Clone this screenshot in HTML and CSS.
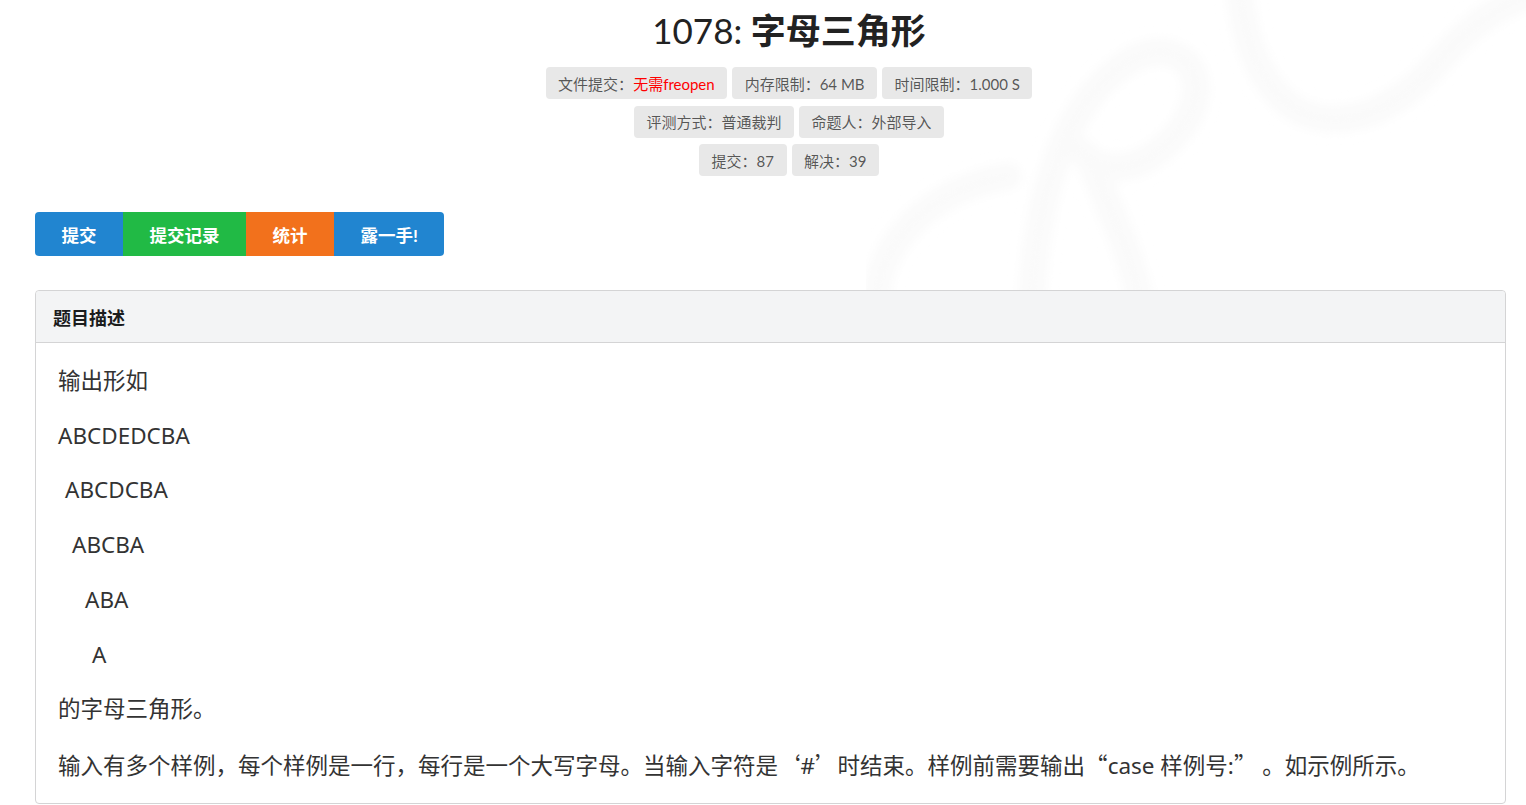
FILE: index.html
```html
<!DOCTYPE html>
<html>
    <head>
        <meta charset="utf-8" />
        <meta name="viewport" content="width=device-width, initial-scale=1" />
        <title>1078: 字母三角形</title>
        <link rel="stylesheet" href="styles.css">
    </head>
    <body>
        <svg class="watermark" width="660" height="300" viewBox="866 0 660 300" aria-hidden="true">
            <defs>
                <filter id="soft"><feGaussianBlur stdDeviation="6" /></filter>
            </defs>
            <g fill="none" stroke="#fafafa" stroke-width="26" stroke-linecap="round" filter="url(#soft)">
                <path d="M876 300 C880 240 930 190 1008 176" />
                <path d="M1032 300 C1034 240 1044 190 1062 145 C1085 90 1130 48 1165 52 C1205 58 1210 110 1160 150 C1130 175 1095 170 1080 150" />
                <path d="M1090 160 C1110 210 1130 250 1140 300" />
                <path d="M1240 -10 C1245 60 1275 110 1320 118 C1370 125 1410 95 1440 60 C1470 25 1500 5 1530 -5" />
            </g>
        </svg>

        <div class="page">
            <div class="problem-header">
                <h1 class="problem-title"><span class="problem-id">1078:</span> 字母三角形</h1>
                <div class="label-row">
                    <span class="info-label">文件提交：<b class="info-red">无需freopen</b></span>
                    <span class="info-label">内存限制：64 MB</span>
                    <span class="info-label">时间限制：1.000 S</span>
                </div>
                <div class="label-row">
                    <span class="info-label">评测方式：普通裁判</span>
                    <span class="info-label">命题人：外部导入</span>
                </div>
                <div class="label-row">
                    <span class="info-label">提交：87</span>
                    <span class="info-label">解决：39</span>
                </div>
            </div>

            <div class="btn-group">
                <a class="btn btn-blue" href="#">提交</a>
                <a class="btn btn-green" href="#">提交记录</a>
                <a class="btn btn-orange" href="#">统计</a>
                <a class="btn btn-blue" href="#">露一手!</a>
            </div>

            <div class="panel">
                <div class="panel__header">题目描述</div>
                <div class="panel__body">
                    <p>输出形如</p>
                    <p>ABCDEDCBA</p>
                    <p class="indent-1">ABCDCBA</p>
                    <p class="indent-2">ABCBA</p>
                    <p class="indent-3">ABA</p>
                    <p class="indent-4">A</p>
                    <p>的字母三角形。</p>
                    <p>输入有多个样例，每个样例是一行，每行是一个大写字母。当输入字符是<span class="cjk-quote">‘</span>#<span class="cjk-quote">’</span>时结束。样例前需要输出<span class="cjk-quote">“</span>case 样例号:<span class="cjk-quote">”</span> 。如示例所示。</p>
                </div>
            </div>
        </div>
    </body>
</html>
```

FILE: styles.css
```css
*,*::before,*::after{
    box-sizing: border-box;
}
body{
    margin:0;
    padding:0;
    background:#fff;
    font-family: Lato, "Noto Sans CJK SC", sans-serif;
    color:rgba(0,0,0,0.87);
    position: relative;
    overflow:hidden;
}
.watermark{
    position:absolute;
    top:0;
    right:0;
    z-index:0;
}
.page{
    position: relative;
    z-index:1;
    padding:0 20px 0 35px;
}

/* title + info labels */
.problem-header{
    padding-left:37px;
    text-align:center;
}
.problem-title{
    margin:9px 0 16px;
    font-size:35px;
    line-height:42px;
    font-weight:700;
    color:#222;
}
.problem-id{
    font-weight:400;
}
.label-row{
    display:flex;
    justify-content:center;
    gap:5px;
    margin-bottom:6.5px;
}
.info-label{
    display:inline-flex;
    align-items:center;
    height:32px;
    padding:0 12.5px;
    background:#e8e8e8;
    border-radius:4px;
    font-size:15px;
    color:rgba(0,0,0,0.65);
}
.info-red{
    color:#ff0000;
    font-weight:400;
}

/* action buttons */
.btn-group{
    display:inline-flex;
    margin-top:29.5px;
    border-radius:4px;
    overflow:hidden;
}
.btn{
    display:flex;
    align-items:center;
    height:44px;
    padding:0 26.5px;
    font-size:17.5px;
    font-weight:700;
    color:#fff;
    text-decoration:none;
}
.btn-blue{ background:#2185d0; }
.btn-green{ background:#21ba45; }
.btn-orange{ background:#f2711c; }

/* description panel */
.panel{
    margin-top:34px;
    border:1px solid #d4d4d5;
    border-radius:4px;
    background:#fff;
}
.panel__header{
    height:52px;
    display:flex;
    align-items:center;
    padding:0 17px;
    background:#f3f4f5;
    border-bottom:1px solid #d4d4d5;
    border-radius:4px 4px 0 0;
    font-size:18px;
    font-weight:700;
    color:#1b1c1d;
}
.panel__body{
    padding:23px 22px 21px;
    font-family:"Noto Sans", "Noto Sans CJK SC", sans-serif;
    font-size:22.5px;
    color:#333;
}
.panel__body p{
    margin:0 0 24px;
    line-height:30.7px;
}
.panel__body p:last-child{
    margin-bottom:0;
}
.cjk-quote{
    font-family:"Noto Sans CJK SC", sans-serif;
}
.indent-1{ padding-left:7px; }
.indent-2{ padding-left:14px; }
.indent-3{ padding-left:27px; }
.indent-4{ padding-left:34px; }
```
